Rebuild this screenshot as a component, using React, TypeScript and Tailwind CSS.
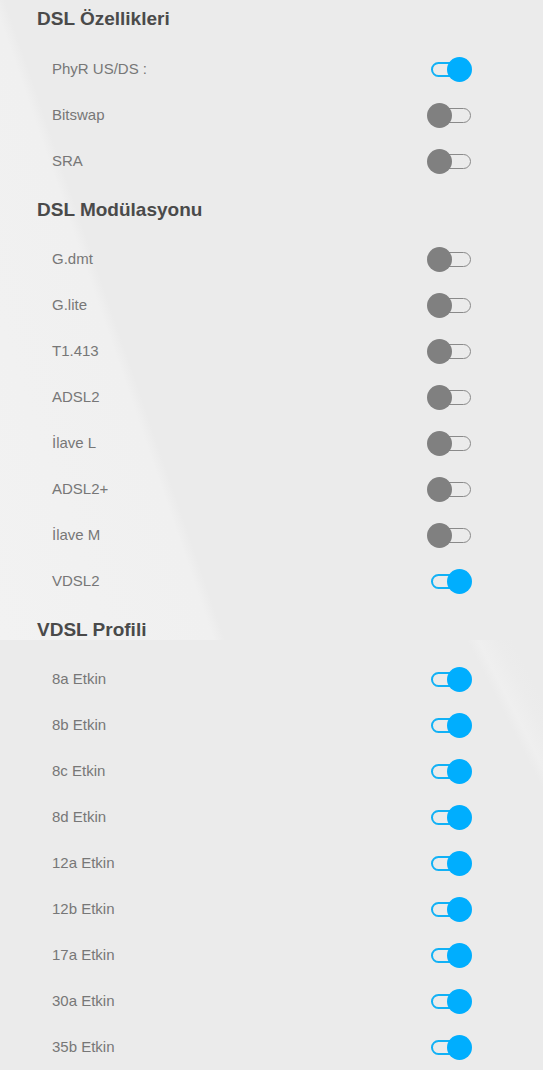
type Item = { label: string; on: boolean };

const sections: { title: string; items: Item[] }[] = [
  {
    title: 'DSL Özellikleri',
    items: [
      { label: 'PhyR US/DS :', on: true },
      { label: 'Bitswap', on: false },
      { label: 'SRA', on: false },
    ],
  },
  {
    title: 'DSL Modülasyonu',
    items: [
      { label: 'G.dmt', on: false },
      { label: 'G.lite', on: false },
      { label: 'T1.413', on: false },
      { label: 'ADSL2', on: false },
      { label: 'İlave L', on: false },
      { label: 'ADSL2+', on: false },
      { label: 'İlave M', on: false },
      { label: 'VDSL2', on: true },
    ],
  },
  {
    title: 'VDSL Profili',
    items: [
      { label: '8a Etkin', on: true },
      { label: '8b Etkin', on: true },
      { label: '8c Etkin', on: true },
      { label: '8d Etkin', on: true },
      { label: '12a Etkin', on: true },
      { label: '12b Etkin', on: true },
      { label: '17a Etkin', on: true },
      { label: '30a Etkin', on: true },
      { label: '35b Etkin', on: true },
    ],
  },
];

function Toggle({ on }: { on: boolean }) {
  return (
    <div className="relative h-[25px] w-[44px] shrink-0">
      <div
        className={
          on
            ? 'absolute left-[4px] top-[5px] h-[15px] w-[40px] rounded-full border-2 border-[#12b1f5]'
            : 'absolute left-[4px] top-[5px] h-[15px] w-[40px] rounded-full border border-[#8a8a8a]'
        }
      />
      <div
        className={
          on
            ? 'absolute left-[20px] top-0 h-[25px] w-[25px] rounded-full bg-[#00aefe]'
            : 'absolute left-0 top-0 h-[25px] w-[25px] rounded-full bg-[#808080]'
        }
      />
    </div>
  );
}

export default function App() {
  return (
    <div className="min-h-[1070px] w-full bg-[#ebebeb] bg-no-repeat font-['Liberation_Sans',Arial,sans-serif] [background-image:linear-gradient(71deg,#f2f2f2_0%,#f0f0f0_28%,#ebebeb_29.5%),linear-gradient(63deg,#ebebeb_90%,#efefef_91.5%,#ececec_94%,#ebebeb_96%)] [background-position:0_0,0_640px] [background-size:100%_640px,100%_430px]">
      {sections.map((s, i) => (
        <section key={s.title}>
          <h2
            className={
              i === 0
                ? 'flex h-[46px] items-center pb-[7px] pl-[37px] text-[19px] font-bold text-[#4a4a4a]'
                : 'flex h-[52px] items-center pl-[37px] text-[19px] font-bold text-[#4a4a4a]'
            }
          >
            {s.title}
          </h2>
          {s.items.map((it) => (
            <div key={it.label} className="flex h-[46px] items-center pl-[52px] pr-[72px]">
              <span className="flex-1 text-[15px] text-[#777777]">{it.label}</span>
              <Toggle on={it.on} />
            </div>
          ))}
        </section>
      ))}
    </div>
  );
}
